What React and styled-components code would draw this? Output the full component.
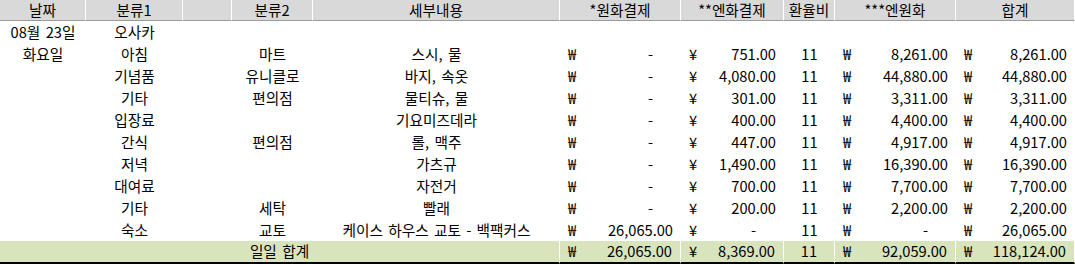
import React from 'react';
import styled, { createGlobalStyle, css } from 'styled-components';

const GlobalStyle = createGlobalStyle`
    html, body {
        margin: 0;
        padding: 0;
        background: #fff;
    }
    body {
        font-family: "Noto Sans CJK KR", "Noto Sans", sans-serif;
        font-size: 14.67px;
        color: #000;
    }
`;

// 열 너비 (엑셀 시트 그대로)
const COLS = '86px 97px 49px 81px 247px 121px 103px 51px 121px 119px';

const Sheet = styled.div`
    width: 1075px;
    display: grid;
    grid-template-columns: ${COLS};
`;

const Head = styled.div`
    height: 20px;
    background: #d9d9d9;
    border-right: 1px solid #fff;
    border-bottom: 1px solid #9b9b9b;
    display: flex;
    align-items: center;
    justify-content: center;
    line-height: 1;
    &:last-child {
        border-right: none;
    }
`;

const Cell = styled.div`
    height: 22px;
    display: flex;
    align-items: center;
    justify-content: ${props => props.align || 'center'};
    line-height: 1;
    white-space: nowrap;
    word-spacing: 2px;
    padding: 0 8px;
    ${props =>
        props.total && css`
        background: #d8e4bc;
        border-right: 1px solid #fff;
        border-bottom: 2px solid #000;
        box-sizing: border-box;
        height: 23px;
    `};
    ${props =>
        props.span && css`
        grid-column: span ${props.span};
    `};
`;

const Sign = styled.span`
    width: 14px;
`;

const Amount = styled.span`
    text-align: right;
    padding-right: ${props => (props.dash ? '20px' : '0')};
`;

const Money = ({ sign, value, total }) => (
    <Cell align="space-between" total={total}>
        <Sign>{sign}</Sign>
        <Amount dash={value === '-'}>{value}</Amount>
    </Cell>
);

const rows = [
    ['화요일', '아침', '마트', '스시, 물', '-', '751.00', '8,261.00', '8,261.00'],
    ['', '기념품', '유니클로', '바지, 속옷', '-', '4,080.00', '44,880.00', '44,880.00'],
    ['', '기타', '편의점', '물티슈, 물', '-', '301.00', '3,311.00', '3,311.00'],
    ['', '입장료', '', '기요미즈데라', '-', '400.00', '4,400.00', '4,400.00'],
    ['', '간식', '편의점', '롤, 맥주', '-', '447.00', '4,917.00', '4,917.00'],
    ['', '저녁', '', '가츠규', '-', '1,490.00', '16,390.00', '16,390.00'],
    ['', '대여료', '', '자전거', '-', '700.00', '7,700.00', '7,700.00'],
    ['', '기타', '세탁', '빨래', '-', '200.00', '2,200.00', '2,200.00'],
    ['', '숙소', '교토', '케이스 하우스 교토 - 백팩커스', '26,065.00', '-', '-', '26,065.00'],
];

const heads = ['날짜', '분류1', '', '분류2', '세부내용', '*원화결제', '**엔화결제', '환율비', '***엔원화', '합계'];

export default () => (
    <>
        <GlobalStyle />
        <Sheet>
            {heads.map((h, i) => (
                <Head key={i}>{h}</Head>
            ))}

            <Cell>08월 23일</Cell>
            <Cell>오사카</Cell>
            <Cell span={8} />

            {rows.map((r, i) => (
                <React.Fragment key={i}>
                    <Cell>{r[0]}</Cell>
                    <Cell>{r[1]}</Cell>
                    <Cell />
                    <Cell>{r[2]}</Cell>
                    <Cell>{r[3]}</Cell>
                    <Money sign="₩" value={r[4]} />
                    <Money sign="¥" value={r[5]} />
                    <Cell>11</Cell>
                    <Money sign="₩" value={r[6]} />
                    <Money sign="₩" value={r[7]} />
                </React.Fragment>
            ))}

            <Cell total span={5}>일일 합계</Cell>
            <Money total sign="₩" value="26,065.00" />
            <Money total sign="¥" value="8,369.00" />
            <Cell total>11</Cell>
            <Money total sign="₩" value="92,059.00" />
            <Money total sign="₩" value="118,124.00" />
        </Sheet>
    </>
);
